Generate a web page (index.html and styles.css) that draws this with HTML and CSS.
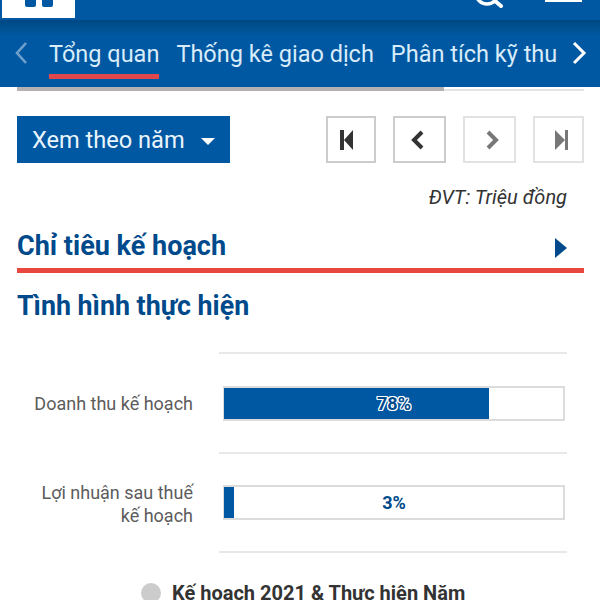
FILE: index.html
```html
<!DOCTYPE html>
<html lang="vi">
<head>
<meta charset="utf-8">
<title>Tổng quan</title>
<link rel="stylesheet" href="styles.css">
</head>
<body>
<header class="header">
  <div class="topbar">
    <div class="logo">
      <svg width="34" height="7" viewBox="0 0 34 7"><rect x="0" y="-5" width="11" height="12" rx="2" fill="#0058a3"/><rect x="17" y="-5" width="11" height="12" rx="2" fill="#0058a3"/></svg>
    </div>
    <div class="top-icons">
      <svg class="search" width="36" height="10" viewBox="0 0 36 10"><circle cx="14" cy="-7" r="11" fill="none" stroke="#fff" stroke-width="3.5"/><path d="M22 1l6 5" stroke="#fff" stroke-width="4" stroke-linecap="round"/></svg>
      <div class="burger"></div>
    </div>
  </div>
  <nav class="tabs">
    <svg class="arrow" width="16" height="24" viewBox="0 0 16 24"><path d="M13 2L4 12l9 10" fill="none" stroke="#6f9fcb" stroke-width="2.6"/></svg>
    <div class="tablist">
      <a class="tab active">Tổng quan</a>
      <a class="tab">Thống kê giao dịch</a>
      <a class="tab">Phân tích kỹ thu</a>
    </div>
    <svg class="arrow" width="16" height="24" viewBox="0 0 16 24"><path d="M3 2l10 10L3 22" fill="none" stroke="#fff" stroke-width="3"/></svg>
  </nav>
</header>
<div class="scrollbar"><div class="thumb"></div></div>
<main class="content">
  <div class="toolbar">
    <button class="dropdown">Xem theo năm<span class="caret"></span></button>
    <div class="pager">
      <button class="pg pg-first"><svg width="16" height="20" viewBox="0 0 16 20"><path d="M2 0h4v20H2zM15 0v20L6 10z" fill="#333"/></svg></button>
      <button class="pg pg-prev"><svg width="16" height="20" viewBox="0 0 16 20"><path d="M13 2L5 10l8 8" fill="none" stroke="#333" stroke-width="4"/></svg></button>
      <button class="pg pg-next off"><svg width="16" height="20" viewBox="0 0 16 20"><path d="M3 2l8 8-8 8" fill="none" stroke="#777" stroke-width="4"/></svg></button>
      <button class="pg pg-last off"><svg width="16" height="20" viewBox="0 0 16 20"><path d="M14 0h-3v20h3zM1 0v20l10-10z" fill="#777"/></svg></button>
    </div>
  </div>
  <p class="unit">ĐVT: Triệu đồng</p>
  <h2 class="section-title">Chỉ tiêu kế hoạch<span class="tri"></span></h2>
  <h2 class="sub-title">Tình hình thực hiện</h2>
  <div class="rows">
    <div class="row">
      <div class="label">Doanh thu kế hoạch</div>
      <div class="cell first"><div class="bar"><div class="fill fill-78"></div><span class="pct pct-on">78%</span></div></div>
    </div>
    <div class="row">
      <div class="label">Lợi nhuận sau thuế<br>kế hoạch</div>
      <div class="cell"><div class="bar"><div class="fill fill-3"></div><span class="pct">3%</span></div></div>
    </div>
  </div>
  <div class="legend"><span class="dot"></span>Kế hoạch 2021 &amp; Thực hiện Năm</div>
</main>
</body>
</html>
```
FILE: styles.css
```css
* { box-sizing: border-box; }
html, body { margin: 0; height: 600px; overflow: hidden; background: #fff; }
body { font-family: Roboto, "Liberation Sans", sans-serif; }

.header { background: #0058a3; }
.topbar { height: 20px; display: flex; justify-content: space-between; padding-left: 2px; padding-right: 18px; overflow: hidden; }
.logo { width: 73px; height: 18px; background: #fff; padding-left: 23px; }
.logo svg { display: block; }
.top-icons { display: flex; gap: 36px; align-items: flex-start; }
.search { display: block; }
.burger { width: 37px; height: 2px; background: #fff; }

.tabs { height: 67px; display: flex; align-items: flex-start; padding: 21px 13px 0 13px; background: linear-gradient(#004785 0, #00528f 8px, #0058a3 16px); }
.arrow { flex: none; }
.tablist { flex: 1; min-width: 0; display: flex; gap: 17px; padding-left: 20px; overflow: hidden; white-space: nowrap; }
.tab { font-size: 23.5px; line-height: 26px; color: #d8ecfa; flex: none; border-bottom: 5px solid transparent; height: 38px; }
.tab.active { border-bottom-color: #e2474b; }

.scrollbar { margin: 0 16px 0 17px; height: 4px; background: linear-gradient(#fff 50%, #e4e4e4 50%); }
.thumb { width: 427px; height: 4px; background: #b5b1b1; }

.content { padding: 25px 16px 0 17px; }
.toolbar { display: flex; justify-content: space-between; }
.dropdown { width: 213px; height: 47px; background: #0058a3; color: #eaf4fb; font: 400 23.6px Roboto, sans-serif; border: 0; padding: 0 15px; display: flex; align-items: center; justify-content: space-between; }
.caret { width: 0; height: 0; border-left: 7px solid transparent; border-right: 7px solid transparent; border-top: 7px solid #fff; margin-top: 3px; }
.pager { display: flex; }
.pg { height: 47px; background: #fff; padding: 0; display: flex; align-items: center; justify-content: center; border: 2px solid #ccc; }
.pg-first { width: 50px; margin-right: 17px; padding-right: 10px; }
.pg-prev { width: 53px; margin-right: 17px; padding-right: 6px; }
.pg-next { width: 53px; margin-right: 17px; padding-left: 6px; }
.pg-last { width: 51px; padding-left: 7px; }
.off { border-color: #e2e2e2; }

.unit { margin: 21px 0 0; padding-right: 17px; text-align: right; font-style: italic; font-size: 20px; line-height: 26px; color: #333; }

.section-title { margin: 18px 0 0; font-size: 27px; line-height: 36px; height: 45px; font-weight: 700; color: #004a8c; border-bottom: 5px solid #e8483f; position: relative; }
.tri { position: absolute; right: 17px; top: 10px; width: 0; height: 0; border-left: 12px solid #004a8c; border-top: 10px solid transparent; border-bottom: 10px solid transparent; }
.sub-title { margin: 16px 0 0; font-size: 26.8px; line-height: 34px; font-weight: 700; color: #004a8c; }

.rows { margin-top: 29px; }
.row { display: flex; gap: 26px; align-items: center; }
.label { width: 176px; flex: none; text-align: right; font-size: 18px; line-height: 23px; color: #5c5c5c; }
.cell { width: 348px; height: 99px; padding: 0 2px 0 4px; display: flex; align-items: center; border-bottom: 2px solid #e8e8e8; }
.cell.first { height: 102px; border-top: 2px solid #e8e8e8; }
.bar { position: relative; flex: 1; height: 35px; border: 2px solid #dcdcdc; background: #fff; display: flex; align-items: center; justify-content: center; }
.fill { position: absolute; left: -1px; top: 0; bottom: 0; background: #0058a3; }
.fill-78 { width: 78.5%; }
.fill-3 { width: 3%; }
.pct { position: relative; font-size: 18px; font-weight: 700; color: #004a8c; }
.pct-on { text-shadow: 1px 0 #fff, -1px 0 #fff, 0 1px #fff, 0 -1px #fff, 1px 1px #fff, -1px -1px #fff, 1px -1px #fff, -1px 1px #fff; }

.legend { margin-top: 27px; padding-left: 124px; display: flex; align-items: center; gap: 11px; font-size: 20px; line-height: 26px; font-weight: 700; color: #333; }
.dot { width: 20px; height: 20px; border-radius: 50%; background: #ccc; flex: none; }
```
